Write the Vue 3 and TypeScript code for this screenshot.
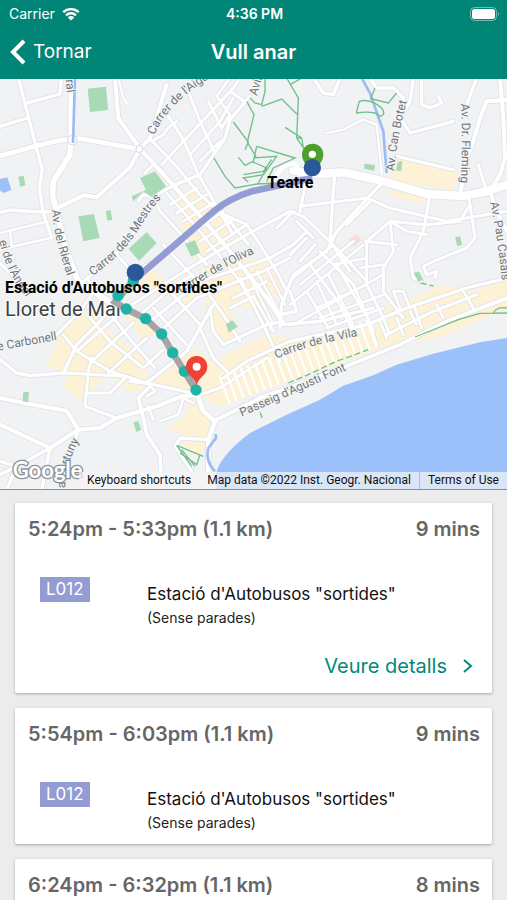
<script setup lang="ts">
import { ref } from 'vue'

interface Trip {
  id: number
  start: string
  end: string
  distance: string
  duration: string
  line: string
  stop: string
  note: string
}

interface Road {
  w: number
  d: string
}

interface StreetLabel {
  id: string
  text: string
  d: string
}

const trips: Trip[] = [
  { id: 1, start: '5:24pm', end: '5:33pm', distance: '1.1 km', duration: '9 mins', line: 'L012', stop: 'Estació d\'Autobusos "sortides"', note: '(Sense parades)' },
  { id: 2, start: '5:54pm', end: '6:03pm', distance: '1.1 km', duration: '9 mins', line: 'L012', stop: 'Estació d\'Autobusos "sortides"', note: '(Sense parades)' },
  { id: 3, start: '6:24pm', end: '6:32pm', distance: '1.1 km', duration: '8 mins', line: 'L012', stop: 'Estació d\'Autobusos "sortides"', note: '(Sense parades)' },
]

const selectedId = ref(1)

const roads: Road[] = [
  // north-west
  { w: 10, d: 'M55 0L108 205L127 275L118 330L130 405L155 480' },
  { w: 10, d: 'M78 76L180 48L184 0M0 145L82 120' },
  { w: 10, d: 'M0 403L30 396L125 402L165 400' },
  { w: 8, d: 'M0 465L135 432M0 515L150 480M30 460L36 506M0 555L45 600' },
  { w: 14, d: 'M0 234L110 203L185 186L240 182L415 213' },
  { w: 12, d: 'M345 0L355 120L420 212' },
  { w: 7, d: 'M355 0L370 60L382 78' },
  { w: 12, d: 'M420 212L390 268L290 358L250 352L168 392' },
  { w: 12, d: 'M420 212L450 180L500 20' },
  { w: 13, d: 'M420 212L520 322L640 460L730 570L800 660L850 735' },
  { w: 9, d: 'M448 180L525 260L600 350L690 430L745 500' },
  { w: 9, d: 'M505 115L550 185L595 290L650 385L700 470' },
  { w: 9, d: 'M565 40L600 130L645 225M625 70L665 150M690 40L740 75' },
  { w: 10, d: 'M750 55L690 125L675 180L600 290L520 322L455 360' },
  { w: 9, d: 'M485 260L560 180L700 30L720 0' },
  { w: 8, d: 'M575 225L660 130L700 60M600 250L660 190M665 150L690 110L650 55L690 0' },
  { w: 8, d: 'M530 130L505 148L490 170L455 190M435 285L460 260' },
  // centre
  { w: 9, d: 'M415 370L430 350L460 355L480 400L540 465L620 560' },
  { w: 8, d: 'M500 345L600 460L720 610L770 700' },
  { w: 8, d: 'M510 380L590 330M530 405L620 350M550 430L640 375M575 465L670 400M600 490L700 425M620 520L740 440' },
  { w: 9, d: 'M350 530L400 585L440 560M250 610L330 550L400 465L450 385' },
  { w: 9, d: 'M260 600L310 680L395 790L465 870' },
  { w: 9, d: 'M395 680L560 575L740 470L870 400L910 415L990 490L1050 580' },
  { w: 9, d: 'M420 710L520 625L580 590M445 735L600 610L810 540L880 500L920 460' },
  { w: 9, d: 'M480 760L590 660L800 575L870 540' },
  { w: 9, d: 'M490 500L620 640L670 710L720 790' },
  { w: 9, d: 'M650 400L740 440L780 500L830 580L860 640' },
  { w: 9, d: 'M700 660L800 610M690 690L760 655L820 760M720 600L790 740L840 850' },
  { w: 7, d: 'M745 590L820 740M770 580L840 710M800 570L855 680' },
  { w: 10, d: 'M640 680L560 820L440 915L390 910' },
  { w: 9, d: 'M600 750L640 840L680 880M630 690L640 760L670 800L800 740L850 730' },
  { w: 9, d: 'M510 640L600 740M460 690L560 800' },
  // west and Carbonell
  { w: 10, d: 'M0 845L50 885L90 893L190 885L230 800L300 730L350 665' },
  { w: 9, d: 'M190 770L230 820L330 880L440 915L600 950' },
  { w: 9, d: 'M170 770L240 700L275 650M270 720L330 790L430 870L490 815' },
  { w: 9, d: 'M230 820L310 750L370 700M275 850L400 735M325 885L440 780M265 880L275 840' },
  { w: 9, d: 'M190 885L380 895L330 945L260 945M265 880L255 985L350 1020' },
  { w: 12, d: 'M0 960L100 980L200 998L235 1055L150 1110L0 1040' },
  { w: 12, d: 'M235 1055L300 1050L350 1020L470 985L545 955L600 950' },
  { w: 11, d: 'M445 930L415 960L430 1020L440 1070L480 1130L485 1236' },
  { w: 8, d: 'M440 910L465 940L440 955M445 985L460 1025M480 1030L535 1010L550 960L580 975' },
  { w: 10, d: 'M150 1110L60 1160L0 1190M150 1110L125 1236M0 1150L50 1165L20 1236M235 1055L195 1180L190 1236' },
  { w: 14, d: 'M590 945L610 1000L645 1030L625 1085L625 1236' },
  { w: 10, d: 'M625 1085L540 1080L525 1105L575 1180' },
  // north-east
  { w: 10, d: 'M940 0L970 45L1000 50L1020 0' },
  { w: 7, d: 'M980 165L1030 155L1090 125L1130 140L1145 290' },
  { w: 10, d: 'M1110 0L1130 30L1180 30L1210 60L1200 120L1230 165L1360 130' },
  { w: 10, d: 'M1240 0L1230 70L1195 130M1265 0L1265 80L1290 90L1325 75L1315 55M1430 0L1400 80' },
  { w: 12, d: 'M1521 65L1460 70L1440 120L1420 190L1400 240L1380 350' },
  { w: 12, d: 'M1500 0L1510 120L1515 240L1500 290L1470 340L1490 400L1521 460' },
  { w: 9, d: 'M1190 235L1360 275M1435 260L1460 340' },
  { w: 10, d: 'M920 300L900 400M1003 300L990 490M1150 310L1010 460L980 520L880 590L845 680L840 750' },
  { w: 9, d: 'M900 385L1100 360L1170 390L1340 430L1521 400' },
  { w: 9, d: 'M1040 440L1110 370M1100 490L1170 430L1280 440L1380 430L1410 380L1405 350' },
  { w: 9, d: 'M1290 350L1270 460L1230 540L1240 600L1265 610' },
  { w: 9, d: 'M1410 380L1425 480L1400 510L1300 550L1270 565L1280 590L1310 580L1305 600' },
  { w: 9, d: 'M1170 430L1180 520L1150 570L1150 640L1210 720' },
  { w: 9, d: 'M1100 490L1100 620L1150 720L1165 760M1095 490L1190 500M1280 470L1220 460L1170 430' },
  // old town grid
  { w: 9, d: 'M830 450L880 400M920 480L870 530M945 500L900 550M890 430L940 480' },
  { w: 9, d: 'M990 490L1100 610M960 520L1060 620L1120 760M930 560L1020 680L1060 760' },
  { w: 8, d: 'M880 600L1000 500M900 620L1060 490M870 680L1090 500M880 740L1150 590' },
  { w: 8, d: 'M950 690L1100 620M960 720L1150 650M980 750L1150 690M1000 560L1100 540M1080 570L1150 560' },
  { w: 8, d: 'M920 640L985 750M950 610L1010 740M985 590L1060 740M1015 570L1090 700' },
  { w: 10, d: 'M850 740L960 730L1120 690M840 710L890 700L870 640' },
  // seafront
  { w: 11, d: 'M640 1030L780 960L1000 880L1200 800L1340 730L1521 660' },
  { w: 10, d: 'M670 900L740 850L870 790L1100 740L1220 690L1400 630L1521 600' },
  { w: 9, d: 'M600 950L660 930L800 840M1160 770L1300 700L1430 650' },
  { w: 8, d: 'M1200 690L1180 640L1210 640L1230 690M1230 700L1250 740M1310 680L1330 720M1390 640L1420 690' },
  { w: 8, d: 'M1110 740L1130 800M1140 730L1160 780M1190 720L1210 770M1245 690L1265 750' },
]

const majorRoads: Road[] = [
  { w: 17, d: 'M215 0L213 190L210 230L160 310L158 350L168 395L200 520L235 610L340 680' },
  { w: 25, d: 'M880 278L950 288L1030 283L1140 307L1280 348L1390 354L1460 340L1521 320' },
]

// Narrow alleys running down to the promenade
const alleys: string[] = Array.from({ length: 22 }, (_, i) => {
  const x = 660 + i * 21
  const y = 925 - i * 8
  return `M${x} ${y - 28}L${x + 28} ${y + 48}`
})

const labels: StreetLabel[] = [
  { id: 'aigua', text: "Carrer de l'Aigua", d: 'M463 172Q505 70 650 -12' },
  { id: 'rieral-n', text: 'ral', d: 'M197 5L204 70' },
  { id: 'rieral', text: 'Av. del Rieral', d: 'M155 396Q165 500 215 630' },
  { id: 'mestres', text: 'Carrer dels Mestres', d: 'M278 594Q380 520 425 440T530 325' },
  { id: 'angel', text: "ei de l'Àngel", d: 'M-2 488Q15 580 80 660' },
  { id: 'oliva', text: "Carrer de l'Oliva", d: 'M545 648Q660 570 810 505' },
  { id: 'carbonell', text: 'e Carbonell', d: 'M-6 818L200 780' },
  { id: 'fortuny', text: 'a Fortuny', d: 'M197 1230Q190 1170 242 1080' },
  { id: 'vila', text: 'Carrer de la Vila', d: 'M830 842Q930 797 1110 768' },
  { id: 'passeig', text: "Passeig d'Agustí Font", d: 'M725 1016L1090 854' },
  { id: 'avinguda', text: 'Avinguda', d: 'M770 55L805 -60' },
  { id: 'botet', text: 'Av. Can Botet', d: 'M1183 280Q1190 170 1230 40' },
  { id: 'fleming', text: 'Av. Dr. Fleming', d: 'M1382 78Q1390 170 1380 360' },
  { id: 'casals', text: 'Av. Pau Casals', d: 'M1470 374Q1495 480 1508 640' },
]

const walkDots: [number, number][] = [
  [400, 608], [354, 653], [379, 693], [437, 722], [485, 768], [518, 824], [553, 880], [588, 936],
]
</script>

<template>
  <div class="screen">
    <header class="top">
      <div class="status">
        <span class="carrier">
          Carrier
          <svg class="wifi" viewBox="0 0 18 14" aria-hidden="true">
            <path d="M1.2 5.2A11.3 11.3 0 0 1 16.8 5.2M4 8.3A7.2 7.2 0 0 1 14 8.3" />
            <path class="solid" d="M9 13.6L5.8 10.4A4.6 4.6 0 0 1 12.2 10.4Z" />
          </svg>
        </span>
        <span class="clock">4:36 PM</span>
        <svg class="battery" viewBox="0 0 30 14" aria-hidden="true">
          <rect class="shell" x="0.5" y="0.5" width="26" height="13" rx="4" />
          <rect class="charge" x="2" y="2" width="23" height="10" rx="2.5" />
          <path class="tip" d="M28 5Q30 7 28 9Z" />
        </svg>
      </div>
      <nav class="nav">
        <button class="back" type="button">
          <svg class="chevron" viewBox="0 0 16 26" aria-hidden="true"><path d="M14 2L3 13L14 24" /></svg>
          Tornar
        </button>
        <h1 class="title">Vull anar</h1>
      </nav>
    </header>

    <section class="map">
      <svg class="canvas" viewBox="0 3 1521 1230">
        <rect class="land" x="0" y="0" width="1521" height="1236" />

        <g class="blocks">
          <path d="M190 740L275 700L330 760L440 845L440 930L390 945L330 890L240 965L190 925L205 890L140 865Z" />
          <path d="M355 690L470 760L430 790ZM425 560L490 600L460 650L400 600ZM510 640L550 610L590 660L545 690Z" />
          <path d="M530 350L590 330L720 430L690 500L590 560L545 440Z" />
          <path d="M600 580L700 540L790 545L860 630L770 690L690 690L720 780L670 800L620 700Z" />
          <path d="M450 920L580 810L640 850L800 770L870 780L1110 740L1170 690L1330 620L1420 640L1521 600L1521 690L1340 770L1260 790L1200 790L660 985L590 950Z" />
          <path d="M560 970L600 950L630 1030L620 1085L600 1140L530 1090L550 1070L500 1050L560 1010Z" />
          <path d="M1195 240L1375 280L1360 335L1160 305ZM1165 335L1285 350L1275 378L1160 350ZM1150 690L1190 655L1200 720L1165 730Z" />
        </g>
        <path class="clinic" d="M1045 484L1070 468L1085 486L1062 506Z" />

        <path class="sea" d="M1521 780L1440 793L1300 827L1190 860L1120 892L1030 923L960 965L860 1010L750 1065Q665 1130 650 1180L650 1236H1521Z" />
        <path class="sea" d="M0 303L22 298L34 335L12 345L0 338Z" />

        <g class="casing">
          <path v-for="road in [...roads, ...majorRoads]" :key="road.d" :d="road.d" :stroke-width="road.w + 5" />
        </g>
        <g class="roads">
          <path v-for="road in roads" :key="road.d" :d="road.d" :stroke-width="road.w" />
          <path v-for="alley in alleys" :key="alley" :d="alley" stroke-width="7" />
          <path v-for="road in majorRoads" :key="road.d" :d="road.d" :stroke-width="road.w" />
          <circle class="roundabout" cx="217" cy="186" r="14" />
          <circle class="roundabout" cx="418" cy="213" r="10" />
          <path d="M830 290Q850 255 885 258L905 285" stroke-width="12" />
        </g>

        <g class="parks">
          <path d="M263 32L318 26L324 96L270 102ZM420 300L465 280L498 325L455 358L430 340L400 370L395 355L438 335Z" />
          <path d="M235 415L282 408L299 480L250 490ZM317 399L332 396L337 425L322 428ZM55 296L71 293L76 322L61 327Z" />
          <path d="M386 512L440 463L470 495L417 549ZM555 498L585 486L600 524L574 536ZM70 943L87 941L84 973L68 970Z" />
          <path d="M400 1032L415 1030L424 1055L409 1062ZM1094 257L1125 261L1123 278L1092 272ZM1193 252L1207 248L1204 280L1188 277Z" />
          <path d="M1365 478L1380 474L1387 500L1372 505ZM1242 584L1257 581L1270 606L1254 611ZM678 739L697 726L713 746L686 764Z" />
        </g>

        <path class="stream" d="M225 0L219 195M1085 0L1110 45L1150 160L1160 285" />
        <path class="stream" d="M647 1068L648 1080L625 1110Q615 1150 645 1180" />
        <g class="trails">
          <path d="M795 0L795 40L785 80L765 75L750 60M860 0L895 60L893 110L890 180L912 212M905 0L870 20M785 85L845 63L893 110M855 148L905 180L910 210M893 180L905 180" />
          <path d="M740 70L762 110L742 192L770 240M700 132L745 192L735 215M642 240L675 295L705 330L770 318L830 315M770 205L885 240L820 270L800 310M770 205L760 250L735 262L715 238M760 240L830 235L790 290L730 300L745 312M755 250L800 270L775 315M730 290L790 280L815 245" />
          <path d="M1125 30L1112 62L1165 75L1190 45M1070 100L1078 70Q1110 60 1145 90Q1160 110 1140 115L1125 105Q1100 100 1070 105Z" />
          <path d="M530 1102L610 1135M540 1125L590 1160L600 1130M545 1115L585 1165M530 1102L575 1165" />
          <path d="M1245 777L1375 725L1440 706L1521 705M1480 705Q1490 685 1521 690" />
          <path class="dashed" d="M865 915L920 892L1010 850L1105 815M1262 615L1300 624M780 1003L788 1024" />
        </g>

        <g class="streets">
          <template v-for="label in labels" :key="label.id">
            <path :id="label.id" class="guide" :d="label.d" />
            <text><textPath :href="'#' + label.id">{{ label.text }}</textPath></text>
          </template>
        </g>

        <text class="google" x="38" y="1200">Google</text>
        <text class="city" x="15" y="714">Lloret de Mar</text>

        <path class="bus" d="M404 604L520 505L645 397Q690 360 755 340L937 300" />
        <path class="walk" d="M400 608L345 672L379 693L437 722L485 768L518 824L553 880L588 936" />
        <circle v-for="dot in walkDots" :key="dot.join()" class="dot" :cx="dot[0]" :cy="dot[1]" r="17" />

        <path class="pin-start" d="M938 292C930 265 906 258 906 229A32 32 0 0 1 970 229C970 258 946 265 938 292Z" />
        <circle class="hole" cx="937" cy="229" r="11" />
        <path class="pin-end" d="M590 922C584 896 558 892 558 866A32 32 0 0 1 622 866C622 892 596 896 590 922Z" />
        <circle class="hole" cx="590" cy="866" r="12" />
        <circle class="stop" cx="937" cy="269" r="26" />
        <circle class="stop" cx="406" cy="583" r="26" />

        <text class="place" x="802" y="331">Teatre</text>
        <text class="place" x="15" y="646">Estació d'Autobusos "sortides"</text>
      </svg>
      <div class="credits">
        <button type="button" class="credit">Keyboard shortcuts</button>
        <span class="credit">Map data ©2022 Inst. Geogr. Nacional</span>
        <a class="credit terms" href="#terms">Terms of Use</a>
      </div>
    </section>

    <main class="trips">
      <article v-for="trip in trips" :key="trip.id" class="card" @click="selectedId = trip.id">
        <header class="summary">
          <h2>{{ trip.start }} - {{ trip.end }} ({{ trip.distance }})</h2>
          <span>{{ trip.duration }}</span>
        </header>
        <div class="leg">
          <span class="line">{{ trip.line }}</span>
          <div>
            <p class="stop-name">{{ trip.stop }}</p>
            <p class="note">{{ trip.note }}</p>
          </div>
        </div>
        <a v-if="trip.id === selectedId" class="details" href="#details">
          Veure detalls
          <svg class="arrow" viewBox="0 0 10 16" aria-hidden="true"><path d="M1 2L8 8L1 14" /></svg>
        </a>
      </article>
    </main>
  </div>
</template>

<style>
body {
  margin: 0;
  background: #ececec;
}
</style>

<style scoped>
.screen {
  display: flex;
  flex-direction: column;
  height: 100vh;
  overflow: hidden;
  background: #ececec;
  font-family: Inter, "Liberation Sans", sans-serif;
}
h1,
h2,
p {
  margin: 0;
}
button {
  border: 0;
  padding: 0;
  background: none;
  font: inherit;
  color: inherit;
}
a {
  text-decoration: none;
}
.top {
  flex: none;
  background: #008577;
  color: #fff;
}
.status {
  display: grid;
  grid-template-columns: 1fr auto 1fr;
  align-items: center;
  height: 27px;
  padding: 0 7px 0 9px;
  font-size: 14px;
}
.carrier {
  display: flex;
  align-items: center;
  gap: 7px;
}
.wifi {
  width: 18px;
  height: 14px;
  fill: none;
  stroke: #fff;
  stroke-width: 2.4;
}
.wifi .solid {
  fill: #fff;
  stroke: none;
}
.clock {
  font-weight: 600;
}
.battery {
  justify-self: end;
  width: 30px;
  height: 14px;
}
.shell {
  fill: none;
  stroke: #fff;
  stroke-opacity: 0.45;
}
.charge {
  fill: #fff;
}
.tip {
  fill: #fff;
  fill-opacity: 0.5;
}
.nav {
  display: grid;
  grid-template-columns: 1fr auto 1fr;
  align-items: center;
  height: 52px;
  padding: 0 10px 2px;
  box-sizing: border-box;
}
.back {
  display: flex;
  align-items: center;
  gap: 7px;
  font-size: 19px;
  line-height: 26px;
}
.chevron {
  width: 16px;
  height: 26px;
  fill: none;
  stroke: #fff;
  stroke-width: 4;
}
.title {
  font-size: 20px;
  font-weight: 600;
  line-height: 26px;
}
.map {
  position: relative;
  flex: none;
  border-bottom: 1px solid #8f8f8f;
}
.canvas {
  display: block;
  width: 100%;
  font-family: Roboto, "Liberation Sans", sans-serif;
}
.land {
  fill: #f0f2f4;
}
.blocks {
  fill: #fdf2d5;
}
.parks {
  fill: #a8dab5;
}
.clinic {
  fill: #fadcd9;
}
.sea {
  fill: #9cc0f9;
}
.casing,
.roads {
  fill: none;
  stroke-linejoin: round;
  stroke-linecap: round;
}
.casing {
  stroke: #dfe2e7;
}
.roads {
  stroke: #fff;
}
.roundabout {
  stroke: #dde0e5;
  stroke-width: 4;
  fill: #fff;
}
.stream {
  fill: none;
  stroke: #9cbcf5;
  stroke-width: 8;
}
.trails {
  fill: none;
  stroke: #6fc08a;
  stroke-width: 4;
}
.dashed {
  stroke-dasharray: 18 9;
}
.guide {
  fill: none;
}
.streets text {
  fill: #70757a;
  stroke: #f5f6f7;
  stroke-width: 5;
  paint-order: stroke;
  font-size: 36px;
}
.google {
  fill: #fff;
  stroke: #8d9094;
  stroke-width: 8;
  paint-order: stroke;
  font-family: Lato, sans-serif;
  font-size: 66px;
  font-weight: 700;
}
.city {
  fill: #3c4043;
  stroke: #fff;
  stroke-width: 6;
  paint-order: stroke;
  font-size: 60px;
}
.place {
  fill: #000;
  font-size: 48px;
  font-weight: 700;
}
.bus {
  fill: none;
  stroke: #939cd3;
  stroke-width: 20;
}
.walk {
  fill: none;
  stroke: #a5a5a5;
  stroke-width: 20;
}
.dot {
  fill: #20b2a6;
}
.stop {
  fill: #2b579b;
}
.pin-start {
  fill: #4f9f2f;
}
.pin-end {
  fill: #ef4136;
}
.hole {
  fill: #fff;
}
.credits {
  position: absolute;
  right: 0;
  bottom: 0;
  display: flex;
  font-family: Roboto, "Liberation Sans", sans-serif;
  font-size: 12px;
  line-height: 17px;
  color: #111;
}
.credit {
  padding: 0 8px;
  background: rgba(245, 245, 245, 0.7);
  color: inherit;
}
.terms {
  margin-left: 1px;
}
.trips {
  display: flex;
  flex: 1;
  flex-direction: column;
  gap: 15px;
  min-height: 0;
  padding: 13px 15px 0;
  overflow-y: auto;
  scrollbar-width: none;
}
.card {
  flex: none;
  padding: 13px 12px 0 13px;
  border-radius: 2px;
  background: #fff;
  box-shadow: 0 1px 3px rgba(0, 0, 0, 0.3);
}
.summary {
  display: flex;
  justify-content: space-between;
  color: #666;
  font-size: 20px;
  font-weight: 600;
  line-height: 26px;
}
.summary h2 {
  font: inherit;
}
.leg {
  display: grid;
  grid-template-columns: 107px 1fr;
  align-items: start;
  padding: 35px 0 9px 12px;
}
.line {
  justify-self: start;
  padding: 0 6px;
  background: #939cd3;
  color: #fff;
  font-size: 17px;
  line-height: 25px;
}
.stop-name {
  margin-top: 5px;
  color: #111;
  font-size: 17px;
  line-height: 24px;
}
.note {
  color: #222;
  font-size: 14px;
  line-height: 24px;
}
.details {
  display: flex;
  align-items: center;
  justify-content: flex-end;
  gap: 16px;
  height: 54px;
  padding-right: 7px;
  color: #00897b;
  font-size: 20px;
}
.arrow {
  width: 10px;
  height: 16px;
  fill: none;
  stroke: #00897b;
  stroke-width: 2;
}
</style>
